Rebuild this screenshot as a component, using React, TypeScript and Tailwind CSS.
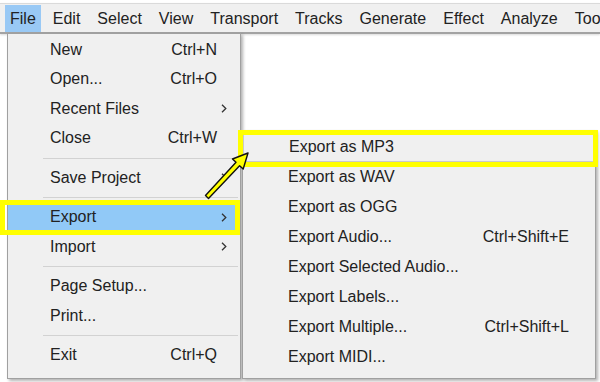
import React from "react";

type Row =
  | { kind: "item"; label: string; shortcut?: string; sub?: boolean; active?: boolean }
  | { kind: "sep" };

const fileMenu: Row[] = [
  { kind: "item", label: "New", shortcut: "Ctrl+N" },
  { kind: "item", label: "Open...", shortcut: "Ctrl+O" },
  { kind: "item", label: "Recent Files", sub: true },
  { kind: "item", label: "Close", shortcut: "Ctrl+W" },
  { kind: "sep" },
  { kind: "item", label: "Save Project", sub: true },
  { kind: "sep" },
  { kind: "item", label: "Export", sub: true, active: true },
  { kind: "item", label: "Import", sub: true },
  { kind: "sep" },
  { kind: "item", label: "Page Setup..." },
  { kind: "item", label: "Print..." },
  { kind: "sep" },
  { kind: "item", label: "Exit", shortcut: "Ctrl+Q" },
];

const exportMenu = [
  { label: "Export as MP3" },
  { label: "Export as WAV" },
  { label: "Export as OGG" },
  { label: "Export Audio...", shortcut: "Ctrl+Shift+E" },
  { label: "Export Selected Audio..." },
  { label: "Export Labels..." },
  { label: "Export Multiple...", shortcut: "Ctrl+Shift+L" },
  { label: "Export MIDI..." },
];

const menuBar = ["File", "Edit", "Select", "View", "Transport", "Tracks", "Generate", "Effect", "Analyze", "Tools"];

function Chevron() {
  return (
    <svg width="6" height="9" viewBox="0 0 6 9" className="block">
      <path d="M1 0.8 L4.8 4.5 L1 8.2" fill="none" stroke="#333" strokeWidth="1.3" />
    </svg>
  );
}

export default function App() {
  return (
    <div className="relative h-[382px] w-[600px] overflow-hidden bg-white font-['Liberation_Sans',Arial,sans-serif] text-[16px] text-[#222]">
      {/* Menu bar */}
      <div className="mt-[3px] flex h-[31px] items-center gap-[7px] whitespace-nowrap border-t border-[#dadada] border-b-2 border-b-[#a3a3a3] bg-[#f0f0f0] pl-[5px] shadow-[0_1px_2px_rgba(0,0,0,0.15)]">
        {menuBar.map((m, i) => (
          <div
            key={m}
            className={`flex h-[27px] items-center px-[5px] pt-[1px] ${i === 0 ? "bg-[#99c9f5]" : ""}`}
          >
            {m}
          </div>
        ))}
      </div>

      {/* File menu */}
      <div className="absolute left-[7px] top-[33px] flex h-[346px] w-[234px] flex-col border border-[#a0a0a0] bg-[#f0f0f0] pt-[1px] shadow-[2px_2px_3px_rgba(0,0,0,0.3)]">
        {fileMenu.map((r, i) =>
          r.kind === "sep" ? (
            <div key={i} className="flex h-[10px] items-center pl-[35px] pr-[2px]">
              <div className="h-px w-full bg-[#d2d2d2]" />
            </div>
          ) : (
            <div
              key={i}
              className={`flex h-[29.5px] items-center pl-[42px] pr-[13px] ${r.active ? "bg-[#91c9f7]" : ""}`}
            >
              <span className="flex-1">{r.label}</span>
              {r.shortcut && <span>{r.shortcut}</span>}
              <span className="flex w-[10px] justify-end">{r.sub && <Chevron />}</span>
            </div>
          )
        )}
      </div>

      {/* Export submenu */}
      <div className="absolute left-[242px] top-[130px] flex h-[249px] w-[354px] flex-col border border-[#a0a0a0] bg-[#f0f0f0] pt-[1px] shadow-[2px_2px_3px_rgba(0,0,0,0.3)]">
        {exportMenu.map((r, i) => (
          <div
            key={r.label}
            className={`flex h-[30px] items-center pl-[45px] pr-[26px] ${i === 0 ? "border border-[#c9c9c9]" : ""}`}
          >
            <span className="flex-1">{r.label}</span>
            {r.shortcut && <span>{r.shortcut}</span>}
          </div>
        ))}
      </div>

      {/* Annotations */}
      <div className="absolute left-0 top-[200px] h-[35px] w-[240px] border-[5px] border-[#ffff00]" />
      <div className="absolute left-[238px] top-[130px] h-[37px] w-[360px] border-[5px] border-[#ffff00]" />
      <svg className="pointer-events-none absolute left-0 top-0" width="600" height="382" viewBox="0 0 600 382">
        <polygon
          points="208.5,198.5 239.6,165.7 243.2,169 248,153 232.5,159 236,162.3 205.5,195.5"
          fill="#ffff00"
          stroke="#111"
          strokeWidth="1.4"
          strokeLinejoin="round"
        />
      </svg>
    </div>
  );
}
